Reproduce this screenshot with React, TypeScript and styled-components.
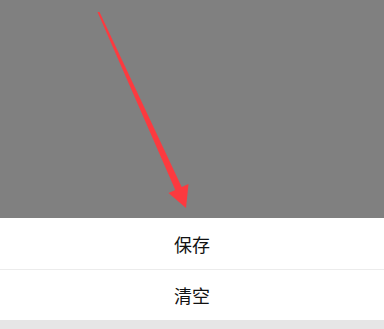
import React from "react";
import styled, { createGlobalStyle } from "styled-components";

const Global = createGlobalStyle`
  html, body { margin: 0; padding: 0; background: #e6e6e6; }
  body { font-family: "Noto Sans CJK SC", "Noto Sans", sans-serif; }
`;

const Page = styled.div`
  display: flex;
  flex-direction: column;
  width: 384px;
  height: 329px;
  overflow: hidden;
  background: #e6e6e6;
`;

const Overlay = styled.div`
  height: 218px;
  background: #808080;
  flex-shrink: 0;
`;

const Sheet = styled.div`
  display: flex;
  flex-direction: column;
  background: #ffffff;
`;

const Action = styled.div<{ $h: number; $divider?: boolean }>`
  height: ${(p) => p.$h}px;
  display: flex;
  align-items: center;
  justify-content: center;
  font-size: 18px;
  color: #111111;
  border-bottom: ${(p) => (p.$divider ? "1px solid #ececec" : "none")};
  box-sizing: content-box;
`;

const ArrowSvg = styled.svg`
  display: block;
`;

export default function App() {
  return (
    <>
      <Global />
      <Page>
        <Overlay>
          <ArrowSvg width="384" height="218" viewBox="0 0 384 218">
            <polygon
              points="97.5,12 99.5,12 181.7,187 188.5,184 186,208 168.5,193 175.3,190"
              fill="#fc3a3f"
            />
          </ArrowSvg>
        </Overlay>
        <Sheet>
          <Action $h={51} $divider>保存</Action>
          <Action $h={50}>清空</Action>
        </Sheet>
      </Page>
    </>
  );
}
